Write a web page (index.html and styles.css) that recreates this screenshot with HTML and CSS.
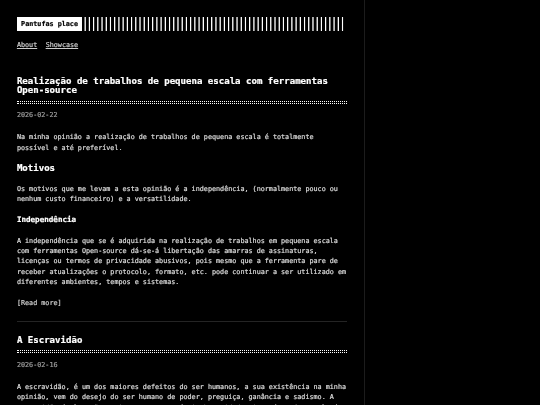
FILE: index.html
```html
<!DOCTYPE html>
<html lang="pt">
<head>
<meta charset="utf-8">
<title>Pantufas place</title>
<link rel="stylesheet" href="styles.css">
</head>
<body>
<div class="container">
  <header class="header">
    <div class="header__inner">
      <div class="header__logo"><a href="#" class="logo">Pantufas place</a></div>
    </div>
    <nav class="menu">
      <ul class="menu__inner">
        <li><a href="#">About</a></li>
        <li><a href="#">Showcase</a></li>
      </ul>
    </nav>
  </header>
  <div class="posts">
    <article class="post">
      <h1 class="post-title"><a href="#">Realização de trabalhos de pequena escala com ferramentas Open-source</a></h1>
      <div class="post-meta"><time>2026-02-22</time></div>
      <div class="post-content">
        <p>Na minha opinião a realização de trabalhos de pequena escala é totalmente possível e até preferível.</p>
        <h2>Motivos</h2>
        <p>Os motivos que me levam a esta opinião é a independência, (normalmente pouco ou nenhum custo financeiro) e a versatilidade.</p>
        <h3>Independência</h3>
        <p>A independência que se é adquirida na realização de trabalhos em pequena escala com ferramentas Open-source dá-se-á libertação das amarras de assinaturas, licenças ou termos de privacidade abusivos, pois mesmo que a ferramenta pare de receber atualizações o protocolo, formato, etc. pode continuar a ser utilizado em diferentes ambientes, tempos e sistemas.</p>
      </div>
      <div><a class="read-more" href="#">[Read more]</a></div>
    </article>
    <article class="post">
      <h1 class="post-title"><a href="#">A Escravidão</a></h1>
      <div class="post-meta"><time>2026-02-16</time></div>
      <div class="post-content">
        <p>A escravidão, é um dos maiores defeitos do ser humanos, a sua existência na minha opinião, vem do desejo do ser humano de poder, preguiça, ganância e sadismo. A escravidão é algo tão antigo quanto a própria humanidade, isto é um fato, ela é praticada desde os primórdios das civilizações até aos dias de hoje.</p>
      </div>
      <div><a class="read-more" href="#">[Read more]</a></div>
    </article>
  </div>
</div>
</body>
</html>
```

FILE: styles.css
```css
html {
  zoom: 0.421875;
  background: #000;
}

body {
  margin: 0;
  padding: 0;
  background: #000;
  color: #dadada;
  font-family: "DejaVu Sans Mono", "Liberation Mono", monospace;
  font-size: 16px;
  line-height: 1.54;
  filter: grayscale(1);
  -webkit-text-stroke: 0.5px currentColor;
}

a {
  color: inherit;
}

.container {
  box-sizing: border-box;
  width: 864px;
  min-height: 1000px;
  padding: 40px;
  border-right: 1px solid #1c1c1c;
}

.header__inner {
  display: flex;
  align-items: center;
}

.header__logo {
  display: flex;
  flex: 1;
}

.header__logo::after {
  content: "";
  display: block;
  width: 100%;
  margin-right: 5px;
  background: repeating-linear-gradient(90deg, transparent 0, transparent 5px, #fff 7px, #fff 8px, transparent 10px);
}

.logo {
  flex: 0 0 auto;
  display: flex;
  align-items: center;
  background: #fff;
  color: #000;
  font-weight: bold;
  padding: 5px 10px;
  text-decoration: none;
  white-space: nowrap;
}

.menu {
  margin: 20px 0;
}

.menu__inner {
  display: flex;
  flex-wrap: wrap;
  list-style: none;
  margin: 0;
  padding: 0;
}

.menu__inner li {
  margin: 0 20px 10px 0;
}

.menu__inner a {
  color: #cccccc;
  text-decoration: underline;
}

.post {
  padding: 33px 0 30px;
}

.post:not(:last-of-type) {
  border-bottom: 1px solid #242424;
}

.post-title {
  position: relative;
  margin: 0 0 15px;
  padding-bottom: 16px;
  font-size: 21.5px;
  line-height: 22.5px;
  font-weight: bold;
  color: #fff;
  border-bottom: 3px dotted #fff;
}

.post-title::after {
  content: "";
  position: absolute;
  bottom: 2px;
  left: 0;
  display: block;
  width: 100%;
  border-bottom: 3px dotted #fff;
}

.post-title a {
  color: #fff;
  text-decoration: none;
}

.post-meta {
  color: #9c9c9c;
  margin-bottom: 28px;
}

.post-content p {
  margin: 25px 0;
}

.post-content h2 {
  margin: 25px 0;
  font-size: 21.5px;
  line-height: 23px;
  color: #fff;
}

.post-content h3 {
  margin: 25px 0;
  font-size: 18px;
  line-height: 23.4px;
  color: #fff;
}

.read-more {
  color: #cccccc;
  text-decoration: none;
}
```
